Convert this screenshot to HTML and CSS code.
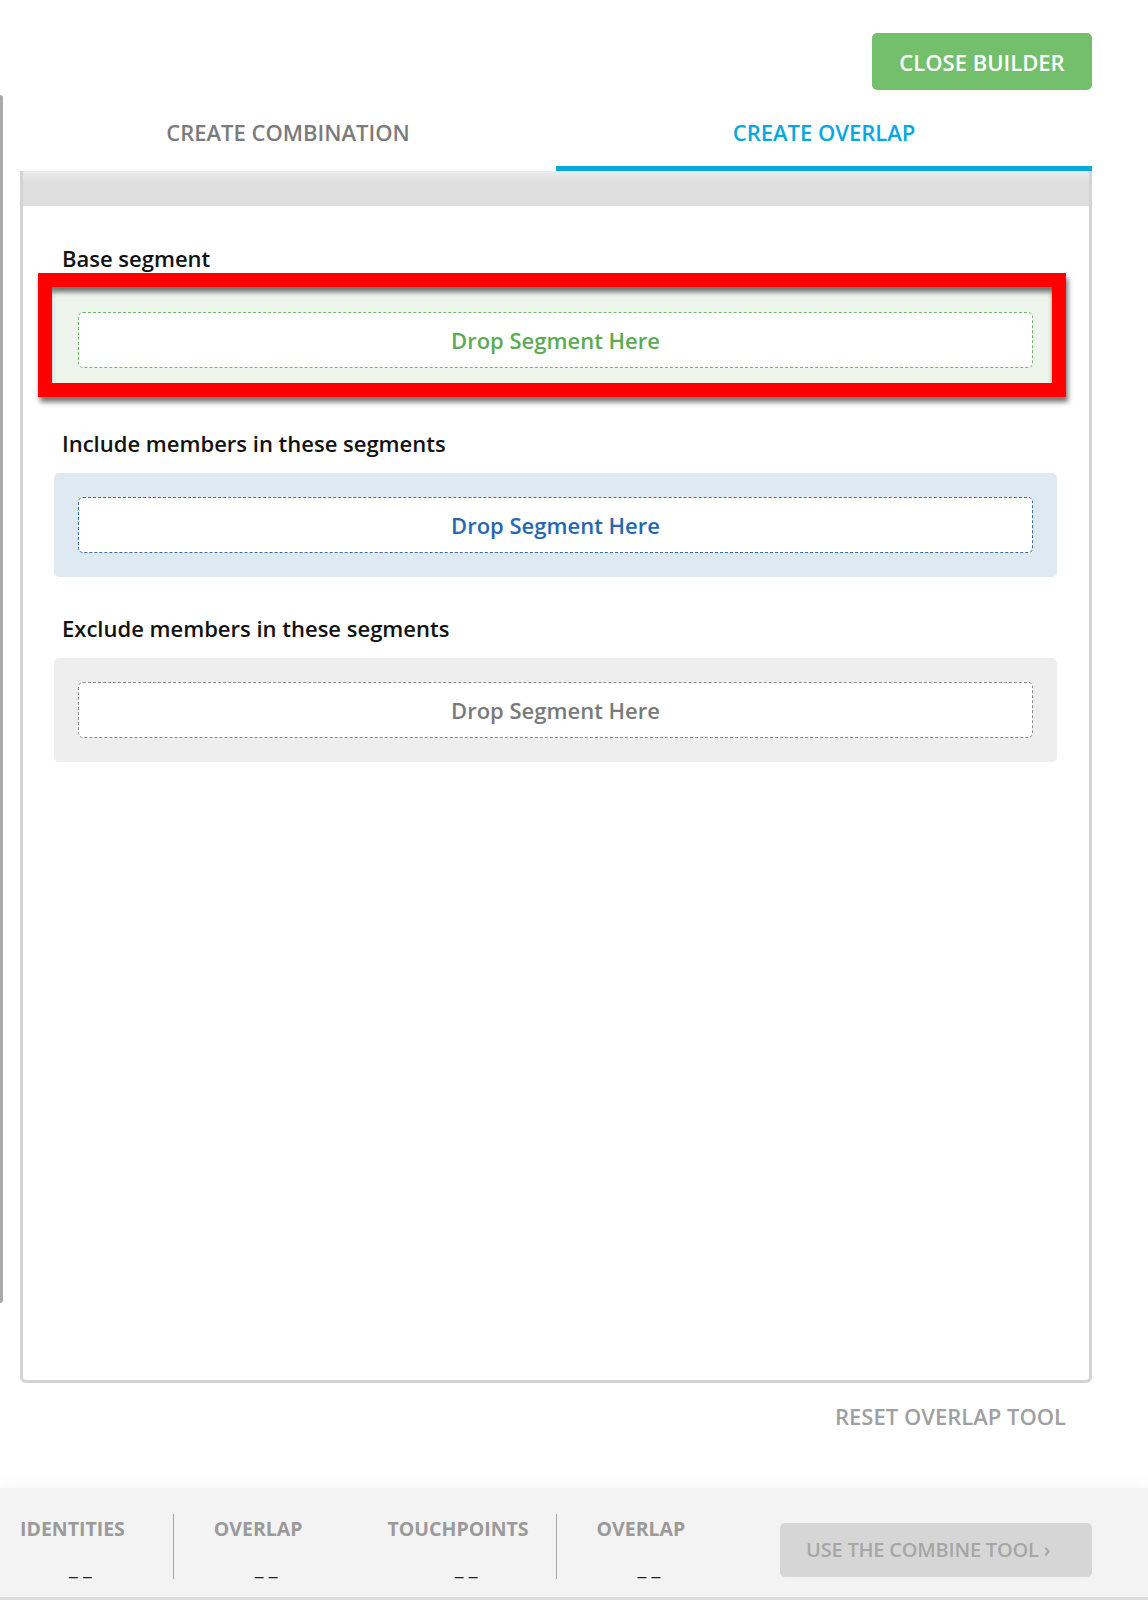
FILE: index.html
```html
<!DOCTYPE html>
<html lang="en">
<head>
  <meta charset="UTF-8" />
  <meta name="viewport" content="width=device-width, initial-scale=1.0"/>
  <title>Segment Builder</title>
  <link rel="stylesheet" href="styles.css">
</head>
<body>

  <div class="side-rail"></div>

  <div class="builder">
    <div class="builder-top">
      <button class="close-btn">CLOSE BUILDER</button>
    </div>

    <div class="tabs">
      <div class="tab">CREATE COMBINATION</div>
      <div class="tab active">CREATE OVERLAP</div>
    </div>

    <div class="panel">
      <div class="panel-band"></div>
      <div class="panel-body">

        <div class="segment-group">
          <h4>Base segment</h4>
          <div class="drop-zone zone-base">
            <div class="drop-target">Drop Segment Here</div>
            <div class="highlight"></div>
          </div>
        </div>

        <div class="segment-group">
          <h4>Include members in these segments</h4>
          <div class="drop-zone zone-include">
            <div class="drop-target">Drop Segment Here</div>
          </div>
        </div>

        <div class="segment-group">
          <h4>Exclude members in these segments</h4>
          <div class="drop-zone zone-exclude">
            <div class="drop-target">Drop Segment Here</div>
          </div>
        </div>

      </div>
    </div>

    <div class="reset-row">
      <a class="reset-link" href="#">RESET OVERLAP TOOL</a>
    </div>
  </div>

  <footer>
    <div class="stat stat-1">
      <span class="stat-label">IDENTITIES</span>
      <span class="stat-value">_ _</span>
    </div>
    <div class="divider"></div>
    <div class="stat stat-2">
      <span class="stat-label">OVERLAP</span>
      <span class="stat-value">_ _</span>
    </div>
    <div class="stat stat-3">
      <span class="stat-label">TOUCHPOINTS</span>
      <span class="stat-value">_ _</span>
    </div>
    <div class="divider"></div>
    <div class="stat stat-4">
      <span class="stat-label">OVERLAP</span>
      <span class="stat-value">_ _</span>
    </div>
    <button class="combine-btn">USE THE COMBINE TOOL &rsaquo;</button>
  </footer>

</body>
</html>
```

FILE: styles.css
```css
* {
  box-sizing: border-box;
  margin: 0;
  padding: 0;
}

body {
  font-family: "Open Sans", Arial, sans-serif;
  background-color: #fff;
  color: #111;
  position: relative;
  width: 1148px;
}

.side-rail {
  position: absolute;
  left: 0;
  top: 95px;
  width: 3px;
  height: 1208px;
  background-color: #a9a9a9;
  border-radius: 0 3px 3px 0;
}

.builder {
  padding: 0 56px 0 20px;
}

.builder-top {
  display: flex;
  justify-content: flex-end;
  padding-top: 33px;
}

.close-btn {
  font-family: inherit;
  background-color: #73bf6b;
  color: white;
  border: none;
  border-radius: 5px;
  width: 220px;
  height: 57px;
  font-size: 22px;
  font-weight: 600;
}

.tabs {
  display: flex;
}

.tab {
  flex: 1;
  text-align: center;
  font-size: 22px;
  font-weight: 600;
  line-height: 27px;
  color: #7b7b7b;
  padding: 29px 0 20px;
  border-bottom: 5px solid transparent;
}

.tab.active {
  color: #05a7e0;
  border-bottom-color: #05a7e0;
}

.panel {
  height: 1212px;
  border: 3px solid #d4d4d4;
  border-top: none;
  border-radius: 0 0 6px 6px;
}

.panel-band {
  height: 35px;
  margin: 0 -3px;
  border-radius: 4px 4px 0 0;
  background: linear-gradient(#ececec, #dedede 35%);
  border-right: 3px solid #d4d4d4;
  border-left: 3px solid #d4d4d4;
}

.panel-body {
  padding: 39px 32px 0 31px;
}

.segment-group {
  margin-bottom: 38px;
}

.segment-group h4 {
  font-size: 22px;
  font-weight: 600;
  line-height: 27px;
  padding-left: 8px;
  margin-bottom: 16px;
  color: #111;
}

.drop-zone {
  position: relative;
  padding: 24px;
  border-radius: 5px;
}

.drop-target {
  height: 56px;
  line-height: 54px;
  text-align: center;
  background-color: #fff;
  border: 1px dashed;
  border-radius: 5px;
  font-size: 22px;
  font-weight: 600;
}

.zone-base {
  background-color: #edf5ec;
}

.zone-base .drop-target {
  color: #5cab54;
  border-color: #6cbb63;
}

.zone-include {
  background-color: #dfe9f2;
}

.zone-include .drop-target {
  color: #2767b0;
  border-color: #2f6db5;
}

.zone-exclude {
  background-color: #eeeeee;
}

.zone-exclude .drop-target {
  color: #7a7a7a;
  border-color: #8a8a8a;
}

/* annotation frame drawn over the base segment */
.highlight {
  position: absolute;
  left: -16px;
  top: -15px;
  right: -9px;
  bottom: -5px;
  border: 14px solid #ff0000;
  box-shadow: 2px 5px 5px rgba(0, 0, 0, 0.55), inset 0 6px 5px -1px rgba(0, 0, 0, 0.55);
}

.reset-row {
  display: flex;
  justify-content: flex-end;
  padding: 20px 26px 0 0;
  height: 105px;
}

.reset-link {
  font-size: 22px;
  font-weight: 600;
  line-height: 27px;
  color: #a0a0a0;
  text-decoration: none;
}

footer {
  display: flex;
  align-items: center;
  height: 112px;
  padding: 0 56px 0 20px;
  background-color: #f3f3f3;
  border-bottom: 3px solid #dcdcdc;
  box-shadow: 0 -8px 14px rgba(0, 0, 0, 0.025);
}

.stat {
  display: flex;
  flex-direction: column;
  align-items: center;
  padding-top: 10px;
}

.stat-label {
  font-size: 19.5px;
  font-weight: 700;
  line-height: 27px;
  color: #9a9a9a;
}

.stat-value {
  margin-top: 12px;
  padding-left: 16px;
  font-size: 20px;
  line-height: 27px;
  color: #222;
  white-space: pre;
}

.stat-1 {
  margin-right: 48px;
}

.stat-2 {
  margin: 0 85px 0 40px;
}

.stat-3 {
  margin-right: 27px;
}

.stat-4 {
  margin-left: 40px;
}

.divider {
  width: 1px;
  height: 65px;
  margin-top: 8px;
  background-color: #a5a5a5;
}

.combine-btn {
  margin-left: auto;
  margin-top: 14px;
  width: 312px;
  height: 54px;
  text-align: left;
  padding-left: 26px;
  font-family: inherit;
  font-size: 20px;
  font-weight: 600;
  color: #a6a6a6;
  background-color: #d6d6d6;
  border: none;
  border-radius: 5px;
  letter-spacing: -0.2px;
}
```
